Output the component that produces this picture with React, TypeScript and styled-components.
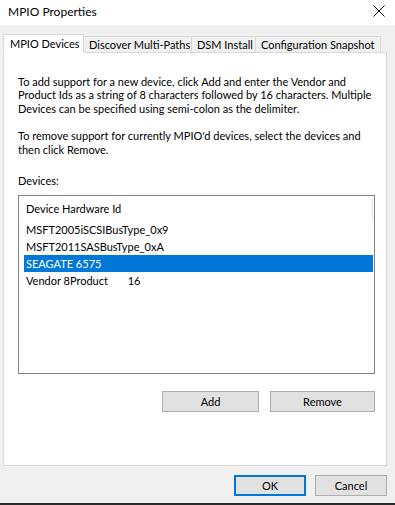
import React from "react";
import styled, { createGlobalStyle } from "styled-components";

const GlobalStyle = createGlobalStyle`
  html, body {
    margin: 0;
    padding: 0;
    background: #f0f0f0;
  }
  body {
    font-family: Lato, "Liberation Sans", sans-serif;
    font-size: 11px;
    color: #000;
  }
`;

const Window = styled.div`
  width: 395px;
  height: 505px;
  display: flex;
  flex-direction: column;
  background: #f0f0f0;
  overflow: hidden;
`;

const TitleBar = styled.div`
  height: 25px;
  background: #fff;
  display: flex;
  align-items: center;
  justify-content: space-between;
  padding: 0 9px 3px 8px;
  box-sizing: border-box;
  font-size: 12px;
`;

const CloseButton = styled.div`
  width: 14px;
  height: 14px;
  display: flex;
  align-items: center;
  justify-content: center;
`;

const TabStrip = styled.div`
  display: flex;
  align-items: flex-end;
  margin: 7px 0 0 3px;
  height: 20px;
  position: relative;
  z-index: 1;
`;

const Tab = styled.div<{ $active?: boolean; $w: number }>`
  box-sizing: border-box;
  height: ${(p) => (p.$active ? "19px" : "16px")};
  width: ${(p) => p.$w}px;
  padding: ${(p) => (p.$active ? "0 0 1px 6px" : "0 0 0 5px")};
  display: flex;
  align-items: center;
  white-space: nowrap;
  background: ${(p) => (p.$active ? "#fff" : "#f0f0f0")};
  border: 1px solid #d9d9d9;
  border-bottom: ${(p) => (p.$active ? "1px solid #fff" : "none")};
  margin-left: ${(p) => (p.$active ? "0" : "-1px")};
  margin-bottom: ${(p) => (p.$active ? "-1px" : "0")};
`;

const Panel = styled.div`
  margin: 0 8px 0 3px;
  height: 414px;
  box-sizing: border-box;
  background: #fff;
  border: 1px solid #d9d9d9;
  padding: 22px 11px 0 14px;
  display: flex;
  flex-direction: column;
`;

const Para = styled.p`
  margin: 0 0 14px 0;
  line-height: 13.4px;
  white-space: nowrap;
`;

const Label = styled.div`
  line-height: 13px;
  margin-top: 4px;
`;

const ListBox = styled.div`
  margin-top: 8px;
  height: 179px;
  box-sizing: border-box;
  border: 1px solid #828282;
  display: flex;
  flex-direction: column;
`;

const HeaderRow = styled.div`
  height: 25px;
  display: flex;
  align-items: center;
  padding: 0 0 0 7px;
  position: relative;
  &::after {
    content: "";
    position: absolute;
    right: 1px;
    top: 2px;
    height: 22px;
    width: 1px;
    background: #e5e5e5;
  }
`;

const Row = styled.div<{ $selected?: boolean }>`
  height: 17px;
  display: flex;
  align-items: center;
  margin: 0 1px 0 5px;
  padding-left: 2px;
  white-space: pre;
  background: ${(p) => (p.$selected ? "#0078d7" : "transparent")};
  color: ${(p) => (p.$selected ? "#fff" : "#000")};
  &:first-of-type {
    margin-top: 2px;
  }
`;

const ButtonRow = styled.div<{ $gap: number }>`
  display: flex;
  justify-content: flex-end;
  gap: ${(p) => p.$gap}px;
`;

const ListButtons = styled(ButtonRow)`
  margin-top: 17px;
`;

const Button = styled.div<{ $w: number; $default?: boolean }>`
  width: ${(p) => p.$w}px;
  height: 21px;
  box-sizing: border-box;
  background: #e1e1e1;
  border: ${(p) => (p.$default ? "2px solid #0078d7" : "1px solid #adadad")};
  display: flex;
  align-items: center;
  justify-content: center;
`;

const Footer = styled(ButtonRow)`
  margin-top: 9px;
  padding-right: 8px;
`;

const Taskbar = styled.div`
  margin-top: auto;
  height: 2px;
  background: #2b2b2b;
`;

const rows = [
  "MSFT2005iSCSIBusType_0x9",
  "MSFT2011SASBusType_0xA",
  "SEAGATE 6575",
  "Vendor 8Product       16",
];

export default function App() {
  return (
    <Window>
      <GlobalStyle />
      <TitleBar>
        <span>MPIO Properties</span>
        <CloseButton>
          <svg width="12" height="12" viewBox="0 0 12 12">
            <path d="M0.5 0.5 L11.5 11.5 M11.5 0.5 L0.5 11.5" stroke="#000" strokeWidth="1" />
          </svg>
        </CloseButton>
      </TitleBar>
      <TabStrip>
        <Tab $active $w={81}>MPIO Devices</Tab>
        <Tab $w={109}>Discover Multi-Paths</Tab>
        <Tab $w={65}>DSM Install</Tab>
        <Tab $w={126}>Configuration Snapshot</Tab>
      </TabStrip>
      <Panel>
        <Para>
          To add support for a new device, click Add and enter the Vendor and
          <br />
          Product Ids as a string of 8 characters followed by 16 characters. Multiple
          <br />
          Devices can be specified using semi-colon as the delimiter.
        </Para>
        <Para>
          To remove support for currently MPIO'd devices, select the devices and
          <br />
          then click Remove.
        </Para>
        <Label>Devices:</Label>
        <ListBox>
          <HeaderRow>Device Hardware Id</HeaderRow>
          {rows.map((r, i) => (
            <Row key={r} $selected={i === 2}>
              {r}
            </Row>
          ))}
        </ListBox>
        <ListButtons $gap={11}>
          <Button $w={97}>Add</Button>
          <Button $w={105}>Remove</Button>
        </ListButtons>
      </Panel>
      <Footer $gap={9}>
        <Button $w={72} $default>
          OK
        </Button>
        <Button $w={72}>Cancel</Button>
      </Footer>
      <Taskbar />
    </Window>
  );
}
